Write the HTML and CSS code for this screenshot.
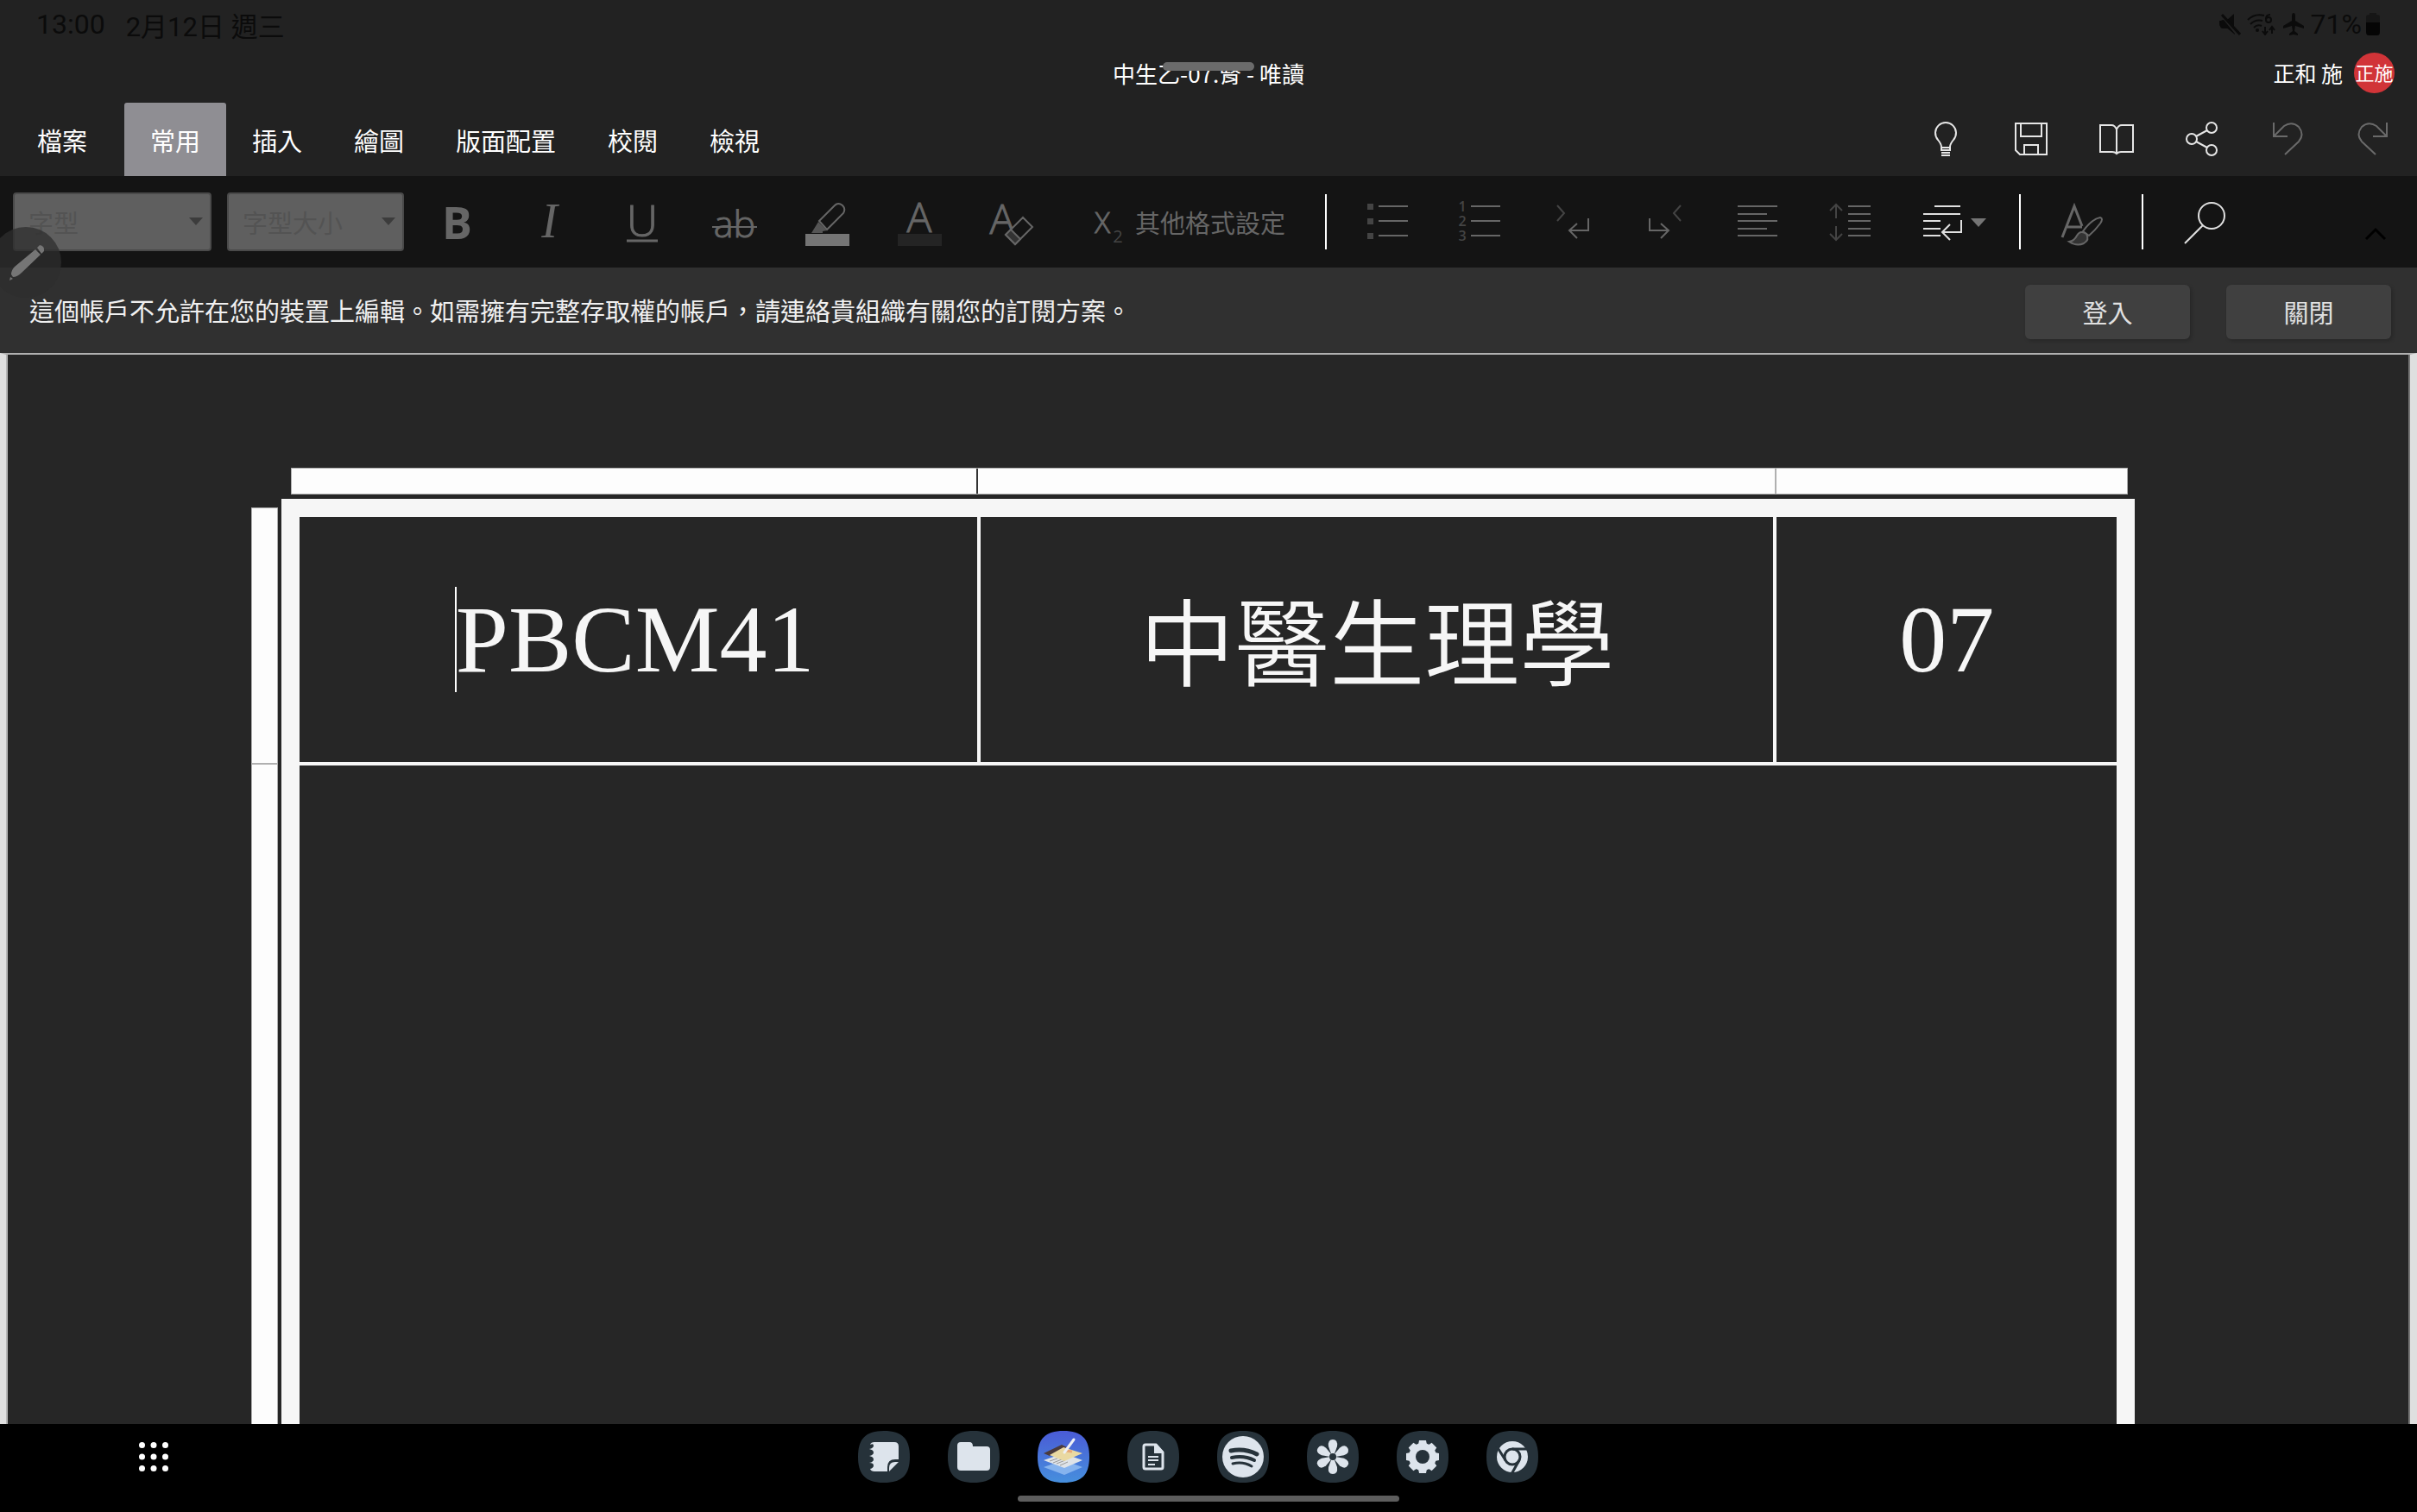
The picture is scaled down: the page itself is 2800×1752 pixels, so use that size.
FILE: index.html
```html
<!DOCTYPE html>
<html lang="zh-Hant">
<head>
    <meta charset="utf-8">
    <title>中生乙-07.腎 - 唯讀</title>
    <link rel="stylesheet" href="styles.css">
</head>

<body>
    <div class="status-bar">
        <span class="clock">13:00</span>
        <span class="date">2月12日 週三</span>
        <div class="status-icons">
            <svg width="26" height="26" viewBox="0 0 26 26">
                <path d="M1 9h5l13 16v0L8 16H4q-3 0-3-3zM10 8l8-7v15z" fill="#0b0b0b"/>
                <path d="M2 12q0-4 4-4l13 16v1l-7-7H5q-3 0-3-3z" fill="#0b0b0b"/>
                <path d="M4 2l21 23" stroke="#0b0b0b" stroke-width="3"/>
            </svg>
            <svg width="34" height="26" viewBox="0 0 34 26" fill="none" stroke="#0b0b0b" stroke-width="2">
                <path d="M1 8q8-8 19-5M4 13q6-6 14-4M8 17q4-4 9-2M21 16v8M18 21l3 4 3-4M29 24v-8M26 20l3-4 3 4M27 2q-5 0-5 5"/>
                <circle cx="25" cy="8" r="3"/>
                <circle cx="12" cy="20" r="1"/>
            </svg>
            <svg width="26" height="26" viewBox="0 0 26 26" fill="#0b0b0b">
                <path d="M13 0q2 0 2 4v5l10 6v3l-10-3-1 6 4 3v2l-5-1-5 1v-2l4-3-1-6-10 3v-3l10-6V4q0-4 2-4z"/>
            </svg>
            <span class="percent">71%</span>
            <svg class="battery" width="18" height="26" viewBox="0 0 18 26">
                <path d="M5 0h8v2h1q3 0 3 3v6H1V5q0-3 3-3h1z" fill="#161616"/>
                <path d="M1 11h16v11q0 4-3 4H4q-3 0-3-4z" fill="#050505"/>
            </svg>
        </div>
    </div>

    <div class="title-bar">
        <h1 class="doc-title">中生乙-07.腎 - 唯讀</h1>
        <div class="account">
            <span>正和 施</span>
            <span class="avatar">正施</span>
        </div>
        <div class="window-handle"></div>
    </div>

    <div class="tab-bar">
        <nav class="tabs">
            <button class="tab tab-file">檔案</button>
            <button class="tab active">常用</button>
            <button class="tab">插入</button>
            <button class="tab">繪圖</button>
            <button class="tab">版面配置</button>
            <button class="tab">校閱</button>
            <button class="tab">檢視</button>
        </nav>
        <div class="quick-actions">
            <button class="quick" aria-label="操作說明">
                <svg class="icon" viewBox="0 0 56 56">
                    <path d="M23 40v-4q0-3-4-8a12 12 0 1 1 18 0q-4 5-4 8v4zM23 37h10M23 43h10M23 46h10" transform="translate(0 1)"/>
                </svg>
            </button>
            <button class="quick" aria-label="儲存">
                <svg class="icon" viewBox="0 0 56 56">
                    <path d="M10 10h36v36H15l-5-5zM16 10v15h24V10M20 46V35h16v11"/>
                </svg>
            </button>
            <button class="quick" aria-label="閱讀檢視">
                <svg class="icon" viewBox="0 0 56 56">
                    <path d="M28 17q-2-5-6-5H9v31h14q3 0 5 2 2-2 5-2h14V12H34q-4 0-6 5zM28 17v28"/>
                </svg>
            </button>
            <button class="quick" aria-label="共用">
                <svg class="icon" viewBox="0 0 56 56">
                    <circle cx="16" cy="28" r="6"/>
                    <circle cx="39" cy="15" r="6"/>
                    <circle cx="39" cy="41" r="6"/>
                    <path d="M21 25l13-7M21 31l13 7"/>
                </svg>
            </button>
            <button class="quick dim" aria-label="復原">
                <svg class="icon" viewBox="0 0 56 56">
                    <path d="M12 9v16h16M12 25l12-12q9-6 17 1 7 9 0 17L25 46"/>
                </svg>
            </button>
            <button class="quick dim" aria-label="取消復原">
                <svg class="icon" viewBox="0 0 56 56">
                    <path d="M44 9v16H28M44 25L32 13q-9-6-17 1-7 9 0 17l16 15"/>
                </svg>
            </button>
        </div>
    </div>

    <div class="ribbon">
        <div class="combo combo-font">
            <select aria-label="字型"><option>字型</option></select>
        </div>
        <div class="combo combo-size">
            <select aria-label="字型大小"><option>字型大小</option></select>
        </div>

        <button class="tool letter bold">B</button>
        <button class="tool letter italic">I</button>
        <button class="tool" aria-label="底線">
            <svg class="icon" viewBox="0 0 56 56">
                <text class="glyph" x="28" y="45" font-size="50">U</text>
                <path d="M10 50h36" stroke-width="3"/>
            </svg>
        </button>
        <button class="tool" aria-label="刪除線">
            <svg class="icon" viewBox="0 0 56 56">
                <text class="glyph" x="28" y="46" font-size="43">ab</text>
                <path d="M2 34h52"/>
            </svg>
        </button>
        <button class="tool" aria-label="醒目提示">
            <svg class="icon" viewBox="0 0 56 56">
                <path d="M3 42h51v14H3z" fill="#757575" stroke="none"/>
                <path d="M19 27l18-18q4-4 9 0 4 4 1 9L28 37z"/>
                <path d="M18 28l10 10-5 1v2H10z" fill="#555" stroke="none"/>
            </svg>
        </button>
        <button class="tool" aria-label="字型色彩">
            <svg class="icon" viewBox="0 0 56 56">
                <path d="M3 42h51v14H3z" fill="#242424" stroke="none"/>
                <text class="glyph" x="28" y="40" font-size="48">A</text>
            </svg>
        </button>
        <button class="tool" aria-label="清除格式">
            <svg class="icon" viewBox="0 0 56 56">
                <text class="glyph" x="17" y="42" font-size="48">A</text>
                <path d="M21 43l20-20 11 11-20 20z" fill="#141414"/>
                <path d="M21 43l6-6 11 11-6 6z" fill="#333"/>
            </svg>
        </button>
        <button class="tool-more">
            <svg class="icon-sub" viewBox="0 0 34 56">
                <text class="glyph" x="10" y="41" font-size="33">X</text>
                <text class="glyph small" x="28" y="52" font-size="20">2</text>
            </svg>
            其他格式設定
        </button>

        <div class="divider divider-paragraph"></div>

        <button class="tool" aria-label="項目符號">
            <svg class="icon" viewBox="0 0 56 56">
                <path d="M4 7h7v7H4zM4 24h7v7H4zM4 41h7v7H4z" fill="#444" stroke="none"/>
                <path d="M17 10h34M17 27h34M17 44h34"/>
            </svg>
        </button>
        <button class="tool" aria-label="編號">
            <svg class="icon" viewBox="0 0 56 56">
                <text class="number" x="7" y="16">1</text>
                <text class="number" x="7" y="33">2</text>
                <text class="number" x="7" y="50">3</text>
                <path d="M17 10h34M17 27h34M17 44h34"/>
            </svg>
        </button>
        <button class="tool" aria-label="由左至右">
            <svg class="icon" viewBox="0 0 56 56">
                <path d="M10 9l8 9-8 9" stroke="#444"/>
                <path d="M46 24v14H24M33 30l-9 8 9 9"/>
            </svg>
        </button>
        <button class="tool" aria-label="由右至左">
            <svg class="icon" viewBox="0 0 56 56">
                <path d="M46 9l-8 9 8 9" stroke="#444"/>
                <path d="M10 24v14h22M23 30l9 8-9 9"/>
            </svg>
        </button>
        <button class="tool" aria-label="對齊">
            <svg class="icon" viewBox="0 0 56 56">
                <path d="M5 10h46M5 19h34M5 27h46M5 36h34M5 44h46"/>
            </svg>
        </button>
        <button class="tool" aria-label="行距">
            <svg class="icon" viewBox="0 0 56 56">
                <path d="M12 24V8M5 15l7-7 7 7M12 33v16M5 42l7 7 7-7" stroke="#444"/>
                <path d="M26 10h26M26 19h26M26 27h26M26 36h26M26 44h26"/>
            </svg>
        </button>
        <button class="tool bright" aria-label="段落格式">
            <svg class="icon-wide" viewBox="0 0 106 56">
                <path d="M44 10h30M31 19h43M31 27h20M31 36h20M31 44h20M75 26v14H53M62 31l-9 9 9 9"/>
                <path d="M86 24h18l-9 10z" fill="#757575" stroke="none"/>
            </svg>
        </button>

        <div class="divider divider-styles"></div>

        <button class="tool" aria-label="樣式">
            <svg class="icon" viewBox="0 0 56 56">
                <path d="M4 46L18 10l9 23M10 34h17" stroke-width="3"/>
                <path d="M28 39q10-14 20-16 4 1 0 7-6 8-13 14z"/>
                <path d="M12 51q6-1 9-7 4-7 11-2 4 7-3 11-8 4-17-2z" fill="#333"/>
            </svg>
        </button>

        <div class="divider divider-search"></div>

        <button class="tool bright" aria-label="尋找">
            <svg class="icon" viewBox="0 0 56 56">
                <circle cx="36" cy="21" r="15"/>
                <path d="M26 32L5 53"/>
            </svg>
        </button>

        <button class="collapse" aria-label="摺疊功能區">
            <svg class="icon" viewBox="0 0 56 56">
                <path d="M17 48l11-11 11 11" stroke="#000" stroke-width="3"/>
            </svg>
        </button>

        <div class="pen-bubble">
            <svg width="82" height="82" viewBox="0 0 82 82" fill="#757575">
                <path d="M24 55q0-5 4-9l24-20 6 6-22 21q-5 5-10 5zM54 24l3-3q6 1 5 7l-3 3z"/>
                <path d="M23 58l3 2-4 2z"/>
            </svg>
        </div>
    </div>

    <div class="message-bar">
        <p>這個帳戶不允許在您的裝置上編輯。如需擁有完整存取權的帳戶，請連絡貴組織有關您的訂閱方案。</p>
        <button class="btn">登入</button>
        <button class="btn">關閉</button>
    </div>

    <main class="document">
        <div class="ruler-top">
            <span class="ruler-col-1"></span>
            <span class="ruler-col-2"></span>
            <span class="ruler-col-3"></span>
        </div>
        <div class="ruler-left">
            <span class="ruler-row"></span>
        </div>
        <table class="page-table">
            <colgroup>
                <col class="col-code">
                <col class="col-subject">
                <col class="col-number">
            </colgroup>
            <tr class="heading-row">
                <td class="code"><span class="with-caret">PBCM41</span></td>
                <td class="subject">中醫生理學</td>
                <td>07</td>
            </tr>
            <tr class="body-row">
                <td colspan="3"></td>
            </tr>
        </table>
    </main>

    <footer class="taskbar">
        <div class="task-row">
            <button class="launcher" aria-label="應用程式">
                <svg width="34" height="34" viewBox="0 0 34 34" fill="#fff">
                    <circle cx="3.5" cy="3.5" r="3.5"/><circle cx="17" cy="3.5" r="3.5"/><circle cx="30.5" cy="3.5" r="3.5"/>
                    <circle cx="3.5" cy="17" r="3.5"/><circle cx="17" cy="17" r="3.5"/><circle cx="30.5" cy="17" r="3.5"/>
                    <circle cx="3.5" cy="30.5" r="3.5"/><circle cx="17" cy="30.5" r="3.5"/><circle cx="30.5" cy="30.5" r="3.5"/>
                </svg>
            </button>
            <div class="apps">
                <button class="app" aria-label="Notes">
                    <svg viewBox="0 0 60 60">
                        <path class="tile" d="M30 0C51 0 60 9 60 30S51 60 30 60 0 51 0 30 9 0 30 0Z"/>
                        <path class="mark" d="M19 13h23q5 0 5 5v15h-4q-9 0-9 9v5H19q-4 0-5-3 4-1 4-4t-5-3q5-1 5-4t-5-4q5-1 5-4t-5-4q5-1 5-4t-4-1q1-3 5-3z"/>
                        <path class="mark" d="M36 47v-4q0-7 7-7h4z"/>
                    </svg>
                </button>
                <button class="app" aria-label="Files">
                    <svg viewBox="0 0 60 60">
                        <path class="tile" d="M30 0C51 0 60 9 60 30S51 60 30 60 0 51 0 30 9 0 30 0Z"/>
                        <path class="mark" d="M15 13h10q4 0 4 5h16q4 0 4 4v20q0 4-4 4H15q-4 0-4-4V17q0-4 4-4z"/>
                    </svg>
                </button>
                <button class="app" aria-label="Notepad">
                    <svg viewBox="0 0 60 60">
                        <defs>
                            <linearGradient id="pad" x1="0" y1="0" x2="0" y2="1">
                                <stop offset="0" stop-color="#4a5bd6"/>
                                <stop offset="1" stop-color="#468fdd"/>
                            </linearGradient>
                        </defs>
                        <path fill="url(#pad)" d="M30 0C51 0 60 9 60 30S51 60 30 60 0 51 0 30 9 0 30 0Z"/>
                        <path fill="#86b3ee" d="M7 42l23-8 22 8-21 9z"/>
                        <path fill="#dfe3e8" d="M7 34l23-8 22 8-21 9z"/>
                        <path d="M14 35l9-3M18 37l10-4M22 38l10-4M26 40l9-4" stroke="#999" fill="none"/>
                        <path fill="#4b3b3c" d="M7 26l21-10 6 3-20 10z"/>
                        <path fill="#ead9a2" d="M14 28l16-9 22 7-21 9z"/>
                        <path d="M33 23l7 1" stroke="#e8a878" stroke-width="3"/>
                        <path d="M31 25L42 10" stroke="#eef0f5" stroke-width="3" stroke-linecap="round"/>
                    </svg>
                </button>
                <button class="app" aria-label="Documents">
                    <svg viewBox="0 0 60 60">
                        <path class="tile" d="M30 0C51 0 60 9 60 30S51 60 30 60 0 51 0 30 9 0 30 0Z"/>
                        <path class="mark-line" d="M21 16h12l8 9v17q0 2-2 2H21q-2 0-2-2V18q0-2 2-2z"/>
                        <path class="mark" d="M31 15h3l8 9v2H31z"/>
                        <path class="mark-line thin" d="M24 30h12M24 34h12M24 39h8"/>
                    </svg>
                </button>
                <button class="app" aria-label="Spotify">
                    <svg viewBox="0 0 60 60">
                        <path class="tile" d="M30 0C51 0 60 9 60 30S51 60 30 60 0 51 0 30 9 0 30 0Z"/>
                        <circle class="mark" cx="30" cy="30" r="24"/>
                        <path class="wave" d="M16 23q16-3 30 4" stroke-width="5"/>
                        <path class="wave" d="M17 31q14-3 26 3" stroke-width="4"/>
                        <path class="wave" d="M18 38q12-3 22 3" stroke-width="3"/>
                    </svg>
                </button>
                <button class="app" aria-label="Gallery">
                    <svg viewBox="0 0 60 60">
                        <path class="tile" d="M30 0C51 0 60 9 60 30S51 60 30 60 0 51 0 30 9 0 30 0Z"/>
                        <g class="mark">
                            <path id="petal" d="M29 29L25 18q-1-8 5-8t5 8l-4 11z"/>
                            <use href="#petal" transform="rotate(60 30 30)"/>
                            <use href="#petal" transform="rotate(120 30 30)"/>
                            <use href="#petal" transform="rotate(180 30 30)"/>
                            <use href="#petal" transform="rotate(240 30 30)"/>
                            <use href="#petal" transform="rotate(300 30 30)"/>
                        </g>
                        <circle class="tile" cx="30" cy="30" r="4"/>
                    </svg>
                </button>
                <button class="app" aria-label="Settings">
                    <svg viewBox="0 0 60 60">
                        <path class="tile" d="M30 0C51 0 60 9 60 30S51 60 30 60 0 51 0 30 9 0 30 0Z"/>
                        <g class="mark">
                            <circle cx="30" cy="30" r="16"/>
                            <path id="tooth" d="M26 11h8l1 5v28l-1 5h-8l-1-5V16z"/>
                            <use href="#tooth" transform="rotate(45 30 30)"/>
                            <use href="#tooth" transform="rotate(90 30 30)"/>
                            <use href="#tooth" transform="rotate(135 30 30)"/>
                        </g>
                        <circle class="tile" cx="30" cy="30" r="8"/>
                    </svg>
                </button>
                <button class="app" aria-label="Chrome">
                    <svg viewBox="0 0 60 60">
                        <path class="tile" d="M30 0C51 0 60 9 60 30S51 60 30 60 0 51 0 30 9 0 30 0Z"/>
                        <circle class="mark" cx="30" cy="30" r="18"/>
                        <circle cx="30" cy="30" r="9" fill="none" stroke="#26323a" stroke-width="3"/>
                        <path d="M30 21h19M38 34l-9 16M22 34L12 18" stroke="#26323a" stroke-width="3"/>
                    </svg>
                </button>
            </div>
        </div>
        <div class="home-handle"></div>
    </footer>
</body>
</html>
```

FILE: styles.css
```css
* {
    box-sizing: border-box;
}
body {
    display: flex;
    flex-direction: column;
    height: 100vh;
    margin: 0;
    overflow: hidden;
    background-color: #222;
    color: #fff;
    font-family: "Noto Sans CJK TC", sans-serif;
    font-size: 29px;
}
button {
    display: flex;
    align-items: center;
    justify-content: center;
    padding: 0;
    border: none;
    background: none;
    color: inherit;
    font: inherit;
    cursor: pointer;
}

/* status bar */
.status-bar {
    display: flex;
    align-items: center;
    height: 58px;
    padding: 0 42px 2px;
    color: #0b0b0b;
    font-family: Roboto, "Noto Sans CJK TC", sans-serif;
    font-size: 32px;
}
.date {
    margin-left: 24px;
    font-size: 31px;
}
.status-icons {
    display: flex;
    align-items: center;
    gap: 7px;
    margin-left: auto;
}
.battery {
    margin-left: -3px;
}

/* title */
.title-bar {
    display: grid;
    grid-template-columns: 1fr auto 1fr;
    align-items: center;
    height: 54px;
    margin-bottom: 7px;
    padding: 0 26px 2px;
    position: relative;
}
.doc-title {
    grid-column: 2;
    margin: 0;
    font-size: 26px;
    font-weight: 400;
}
.account {
    display: flex;
    align-items: center;
    justify-content: flex-end;
    gap: 13px;
    font-size: 25px;
}
.avatar {
    display: flex;
    align-items: center;
    justify-content: center;
    width: 47px;
    height: 47px;
    padding-bottom: 2px;
    border-radius: 50%;
    background-color: #d13438;
    font-size: 22px;
}
.window-handle {
    position: absolute;
    top: 14px;
    left: 50%;
    width: 106px;
    height: 10px;
    margin-left: -53px;
    border-radius: 5px;
    background-color: #6b6b6b;
}

/* tabs */
.tab-bar {
    display: flex;
    justify-content: space-between;
    height: 85px;
}
.tabs,
.quick-actions {
    display: flex;
}
.tabs {
    padding-left: 13px;
}
.quick-actions {
    padding: 0 2px 2px 0;
}
.tab {
    padding: 0 30px;
}
.tab-file {
    margin-right: 13px;
}
.tab.active {
    border-radius: 3px 3px 0 0;
    background-color: #8f8e93;
}
.quick {
    width: 99px;
    color: #e6e6e6;
}
.quick.dim {
    color: #6a6a6a;
}

/* icons */
.icon,
.icon-wide,
.icon-sub {
    display: block;
    width: 56px;
    height: 56px;
    overflow: visible;
    fill: none;
    stroke: currentColor;
    stroke-width: 2;
}
.icon-wide {
    width: 106px;
}
.icon-sub {
    width: 34px;
}
.glyph {
    fill: currentColor;
    stroke-width: 1;
    font-family: "Open Sans", sans-serif;
    font-weight: 300;
    text-anchor: middle;
}
.glyph.small {
    fill: #444;
    stroke: none;
    font-weight: 400;
}
.number {
    fill: #444;
    stroke: none;
    font-family: "Open Sans", sans-serif;
    font-size: 16px;
    font-weight: 600;
    text-anchor: middle;
}

/* ribbon */
.ribbon {
    display: flex;
    align-items: center;
    height: 106px;
    padding-left: 15px;
    position: relative;
    background-color: #141414;
    color: #666;
}
.combo {
    position: relative;
}
.combo-font {
    width: 230px;
    margin-right: 18px;
}
.combo-size {
    width: 205px;
    margin-right: 8px;
}
.combo select {
    width: 100%;
    height: 68px;
    padding: 0 16px;
    appearance: none;
    border: 2px solid #4a4a4a;
    border-radius: 4px;
    background-color: #5f5f5f;
    color: #535353;
    font: inherit;
}
.combo::after {
    content: "";
    position: absolute;
    top: 29px;
    right: 10px;
    border: 8px solid transparent;
    border-top: 9px solid #3c3c3c;
    border-bottom: none;
}
.tool {
    width: 107px;
    height: 100%;
}
.tool.bright {
    color: #e0e0e0;
}
.letter {
    padding-bottom: 2px;
    font-family: "Open Sans", sans-serif;
    font-size: 52px;
}
.bold {
    font-weight: 700;
}
.italic {
    font-family: "Liberation Serif", serif;
    font-size: 56px;
    font-style: italic;
}
.tool-more {
    gap: 14px;
    height: 100%;
    padding-left: 42px;
}
.divider {
    width: 2px;
    height: 64px;
    background-color: #fff;
}
.divider-paragraph {
    margin: 0 17px 0 46px;
}
.divider-styles {
    margin: 0 18px 0 36px;
}
.divider-search {
    margin: 0 17px 0 15px;
}
.collapse {
    margin: 0 20px 0 auto;
}
.pen-bubble {
    position: absolute;
    top: 59px;
    left: -11px;
    z-index: 1;
    width: 82px;
    height: 82px;
    border-radius: 50%;
    background-color: rgba(45, 45, 45, 0.75);
}

/* message */
.message-bar {
    display: flex;
    align-items: center;
    gap: 42px;
    height: 99px;
    padding: 3px 30px 0 34px;
    background-color: #303030;
}
.message-bar p {
    flex: 1;
    margin: 0 0 4px;
    color: #f0f0f0;
}
.btn {
    width: 191px;
    height: 63px;
    border-radius: 6px;
    background-color: #404040;
    box-shadow: 2px 2px 4px rgba(0, 0, 0, 0.2);
    color: #e0e0e0;
}

/* document */
.document {
    display: grid;
    flex: 1;
    grid-template-columns: 31px 1fr;
    grid-template-rows: 31px 1fr;
    gap: 5px 4px;
    min-height: 0;
    padding: 131px 319px 0 284px;
    overflow: hidden;
    border: solid #dfdfdf;
    border-width: 2px 8px 0 7px;
    border-top-color: #b0b0b0;
    background-color: #262626;
    box-shadow: inset 2px 0 #b5b5b5, inset -2px 0 #777;
}
.ruler-top {
    display: flex;
    grid-column: 2;
    margin: 0 8px 0 11px;
    border: 1px solid #b0b0b0;
    background-color: #fdfdfd;
}
.ruler-col-1 {
    width: 37.4%;
    border-right: 2px solid #333;
}
.ruler-col-2 {
    width: 43.5%;
    border-right: 2px solid #b0b0b0;
}
.ruler-left {
    margin-top: 10px;
    border: 1px solid #b0b0b0;
    border-bottom: none;
    background-color: #fdfdfd;
}
.ruler-row {
    display: block;
    height: 297px;
    border-bottom: 2px solid #b0b0b0;
}
.page-table {
    width: 100%;
    table-layout: fixed;
    border: 21px solid #f6f6f6;
    border-spacing: 0;
    color: #f6f6f6;
    font-family: "Liberation Serif", serif;
    font-size: 110px;
    text-align: center;
}
.page-table td {
    padding: 0;
}
.col-code {
    width: 37.5%;
}
.col-subject {
    width: 43.8%;
}
.heading-row td {
    height: 288px;
    border-right: 4px solid #f6f6f6;
    border-bottom: 4px solid #f6f6f6;
}
.heading-row td:last-child {
    border-right: none;
}
.page-table .code {
    padding-right: 8px;
}
.page-table .subject {
    padding-bottom: 4px;
    font-family: "Noto Sans CJK TC", sans-serif;
    font-weight: 350;
    line-height: 1;
}
.with-caret {
    position: relative;
}
.with-caret::before {
    content: "";
    position: absolute;
    top: 0;
    left: -1px;
    width: 2px;
    height: 100%;
    background-color: #fff;
}
.body-row td {
    height: 900px;
}

/* taskbar */
.taskbar {
    height: 102px;
    padding-top: 8px;
    background-color: #000;
}
.task-row {
    display: grid;
    grid-template-columns: 1fr auto 1fr;
    align-items: center;
    padding: 0 24px 0 0;
}
.launcher {
    justify-self: start;
    margin-left: 161px;
}
.apps {
    display: flex;
    gap: 44px;
}
.app svg {
    display: block;
    width: 60px;
    height: 60px;
}
.tile {
    fill: #26323a;
}
.mark {
    fill: #dde4ec;
}
.mark-line {
    fill: none;
    stroke: #dde4ec;
    stroke-width: 3;
}
.mark-line.thin {
    stroke-width: 2;
}
.wave {
    fill: none;
    stroke: #26323a;
    stroke-linecap: round;
}
.home-handle {
    width: 442px;
    height: 7px;
    margin: 15px auto 0;
    border-radius: 4px;
    background-color: #5d5d5d;
}
```
